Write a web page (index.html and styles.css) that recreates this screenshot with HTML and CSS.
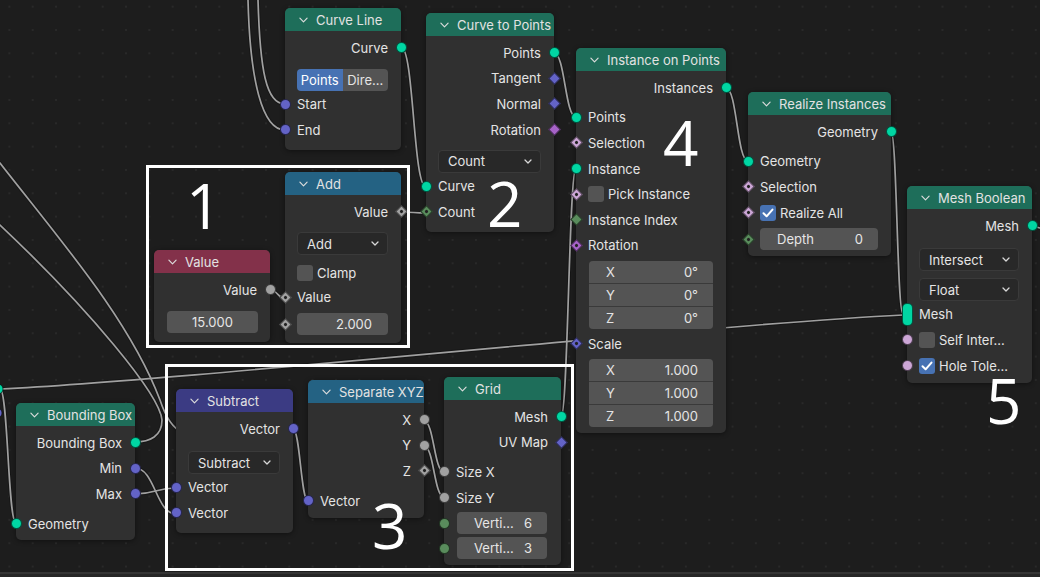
FILE: index.html
```html
<!DOCTYPE html>
<html>
<head>
<meta charset="utf-8">
<link rel="stylesheet" href="styles.css">
</head>
<body>
<div class="canvas">
  <svg class="wires" width="1040" height="572" viewBox="0 0 1040 572">
    <g class="wire-under">
      <path d="M258,0 C260,70 266,104 285,104"/>
      <path d="M248,0 C250,80 262,130 285,130"/>
      <path d="M401,47 C414,47 413,187 426,187"/>
      <path d="M401,212 C413,212 414,213 426,213"/>
      <path d="M270,290 C278,290 277,298 285,298"/>
      <path d="M554,53 C565,53 565,117 576,117"/>
      <path d="M726,88 C737,88 737,161 748,161"/>
      <path d="M891,132 C897,132 897,314 903,314"/>
      <path d="M0,389 C200,379 700,325 903,315"/>
      <path d="M0,389 C8,389 8,523 16,523"/>
      <path d="M135,442 C150,442 162,436 162,420 C160,395 90,310 0,225"/>
      <path d="M0,163 C60,240 130,320 160,400 C165,415 172,428 182,432"/>
      <path d="M135,468 C155,468 156,514 176,514"/>
      <path d="M135,494 C155,494 156,488 176,488"/>
      <path d="M293,429 C300,429 301,501 308,501"/>
      <path d="M424,421 C434,421 434,472 444,472"/>
      <path d="M424,446 C434,446 434,497 444,497"/>
      <path d="M561,417 C568,417 569,168 576,168"/>
      <path d="M1032,226 C1036,226 1038,228 1040,228"/>
    </g>
    <g class="wire">
      <path d="M258,0 C260,70 266,104 285,104"/>
      <path d="M248,0 C250,80 262,130 285,130"/>
      <path d="M401,47 C414,47 413,187 426,187"/>
      <path d="M401,212 C413,212 414,213 426,213"/>
      <path d="M270,290 C278,290 277,298 285,298"/>
      <path d="M554,53 C565,53 565,117 576,117"/>
      <path d="M726,88 C737,88 737,161 748,161"/>
      <path d="M891,132 C897,132 897,314 903,314"/>
      <path d="M0,389 C200,379 700,325 903,315"/>
      <path d="M0,389 C8,389 8,523 16,523"/>
      <path d="M135,442 C150,442 162,436 162,420 C160,395 90,310 0,225"/>
      <path d="M0,163 C60,240 130,320 160,400 C165,415 172,428 182,432"/>
      <path d="M135,468 C155,468 156,514 176,514"/>
      <path d="M135,494 C155,494 156,488 176,488"/>
      <path d="M293,429 C300,429 301,501 308,501"/>
      <path d="M424,421 C434,421 434,472 444,472"/>
      <path d="M424,446 C434,446 434,497 444,497"/>
      <path d="M561,417 C568,417 569,168 576,168"/>
      <path d="M1032,226 C1036,226 1038,228 1040,228"/>
    </g>
    <circle class="edge-sock" cx="-2" cy="389" r="5" fill="#00d6a3"/>
    <circle class="edge-sock" cx="-3" cy="413" r="5" fill="#6363c7"/>
  </svg>

  <!-- Curve Line -->
  <div class="node n-cl">
    <div class="hdr h-geo"><svg class="chev" viewBox="0 0 10 6"><path d="M1,1 L5,5 L9,1"/></svg><span>Curve Line</span></div>
    <div class="body">
      <div class="row out">Curve<i class="sk c geo"></i></div>
      <div class="w m7"><div class="tog"><span class="on">Points</span><span>Dire...</span></div></div>
      <div class="row in"><i class="sk c vec"></i>Start</div>
      <div class="row in"><i class="sk c vec"></i>End</div>
    </div>
  </div>

  <!-- Curve to Points -->
  <div class="node n-c2p">
    <div class="hdr h-geo"><svg class="chev" viewBox="0 0 10 6"><path d="M1,1 L5,5 L9,1"/></svg><span>Curve to Points</span></div>
    <div class="body">
      <div class="row out">Points<i class="sk c geo"></i></div>
      <div class="row out">Tangent<i class="sk d vec"></i></div>
      <div class="row out">Normal<i class="sk d vec"></i></div>
      <div class="row out">Rotation<i class="sk d rot"></i></div>
      <div class="w m7"><div class="menu"><span>Count</span><svg class="mchev" viewBox="0 0 8 5"><path d="M1,1 L4,4 L7,1"/></svg></div></div>
      <div class="row in"><i class="sk c geo"></i>Curve</div>
      <div class="row in"><i class="sk d p int"></i>Count</div>
    </div>
  </div>

  <!-- Add -->
  <div class="node n-add">
    <div class="hdr h-conv"><svg class="chev" viewBox="0 0 10 6"><path d="M1,1 L5,5 L9,1"/></svg><span>Add</span></div>
    <div class="body">
      <div class="row out">Value<i class="sk d p flt"></i></div>
      <div class="w m7"><div class="menu"><span>Add</span><svg class="mchev" viewBox="0 0 8 5"><path d="M1,1 L4,4 L7,1"/></svg></div></div>
      <div class="w m5"><span class="cb"></span>Clamp</div>
      <div class="row in"><i class="sk d p flt"></i>Value</div>
      <div class="w in m2"><i class="sk d p flt"></i><div class="fld rt">2.000</div></div>
    </div>
  </div>

  <!-- Value -->
  <div class="node n-val">
    <div class="hdr h-input"><svg class="chev" viewBox="0 0 10 6"><path d="M1,1 L5,5 L9,1"/></svg><span>Value</span></div>
    <div class="body">
      <div class="row out">Value<i class="sk c flt"></i></div>
      <div class="w m7 wv"><div class="fld ctr">15.000</div></div>
    </div>
  </div>

  <!-- Instance on Points -->
  <div class="node n-iop">
    <div class="hdr h-geo"><svg class="chev" viewBox="0 0 10 6"><path d="M1,1 L5,5 L9,1"/></svg><span>Instance on Points</span></div>
    <div class="body">
      <div class="row out">Instances<i class="sk c geo"></i></div>
      <div class="row in m4"><i class="sk c geo"></i>Points</div>
      <div class="row in"><i class="sk d p bool"></i>Selection</div>
      <div class="row in"><i class="sk c geo"></i>Instance</div>
      <div class="row in"><i class="sk d p bool"></i><span class="cb"></span>Pick Instance</div>
      <div class="row in"><i class="sk d int"></i>Instance Index</div>
      <div class="row in"><i class="sk d p rot"></i>Rotation</div>
      <div class="vb m3">
        <div><span>X</span><span>0°</span></div>
        <div><span>Y</span><span>0°</span></div>
        <div><span>Z</span><span>0°</span></div>
      </div>
      <div class="row in m2"><i class="sk d p vec"></i>Scale</div>
      <div class="vb m2">
        <div><span>X</span><span>1.000</span></div>
        <div><span>Y</span><span>1.000</span></div>
        <div><span>Z</span><span>1.000</span></div>
      </div>
    </div>
  </div>

  <!-- Realize Instances -->
  <div class="node n-ri">
    <div class="hdr h-geo"><svg class="chev" viewBox="0 0 10 6"><path d="M1,1 L5,5 L9,1"/></svg><span>Realize Instances</span></div>
    <div class="body">
      <div class="row out">Geometry<i class="sk c geo"></i></div>
      <div class="row in m4"><i class="sk c geo"></i>Geometry</div>
      <div class="row in"><i class="sk d p bool"></i>Selection</div>
      <div class="row in"><i class="sk d p bool"></i><span class="cb on"><svg viewBox="0 0 16 16"><path d="M3.5,8.3 L6.6,11.3 L12.5,4.6"/></svg></span>Realize All</div>
      <div class="w in m2"><i class="sk d p int"></i><div class="fld"><span>Depth</span><span>0</span></div></div>
    </div>
  </div>

  <!-- Mesh Boolean -->
  <div class="node n-mb">
    <div class="hdr h-geo"><svg class="chev" viewBox="0 0 10 6"><path d="M1,1 L5,5 L9,1"/></svg><span>Mesh Boolean</span></div>
    <div class="body">
      <div class="row out">Mesh<i class="sk c geo"></i></div>
      <div class="w m9"><div class="menu"><span>Intersect</span><svg class="mchev" viewBox="0 0 8 5"><path d="M1,1 L4,4 L7,1"/></svg></div></div>
      <div class="w m6"><div class="menu"><span>Float</span><svg class="mchev" viewBox="0 0 8 5"><path d="M1,1 L4,4 L7,1"/></svg></div></div>
      <div class="row in"><i class="sk pill geo"></i>Mesh</div>
      <div class="row in"><i class="sk c bool"></i><span class="cb"></span>Self Inter...</div>
      <div class="row in"><i class="sk c bool"></i><span class="cb on"><svg viewBox="0 0 16 16"><path d="M3.5,8.3 L6.6,11.3 L12.5,4.6"/></svg></span>Hole Tole...</div>
    </div>
  </div>

  <!-- Bounding Box -->
  <div class="node n-bb">
    <div class="hdr h-geo"><svg class="chev" viewBox="0 0 10 6"><path d="M1,1 L5,5 L9,1"/></svg><span>Bounding Box</span></div>
    <div class="body">
      <div class="row out">Bounding Box<i class="sk c geo"></i></div>
      <div class="row out">Min<i class="sk c vec"></i></div>
      <div class="row out">Max<i class="sk c vec"></i></div>
      <div class="row in m4"><i class="sk c geo"></i>Geometry</div>
    </div>
  </div>

  <!-- Subtract -->
  <div class="node n-sub">
    <div class="hdr h-vec"><svg class="chev" viewBox="0 0 10 6"><path d="M1,1 L5,5 L9,1"/></svg><span>Subtract</span></div>
    <div class="body">
      <div class="row out">Vector<i class="sk c vec"></i></div>
      <div class="w m9"><div class="menu"><span>Subtract</span><svg class="mchev" viewBox="0 0 8 5"><path d="M1,1 L4,4 L7,1"/></svg></div></div>
      <div class="row in"><i class="sk c vec"></i>Vector</div>
      <div class="row in"><i class="sk c vec"></i>Vector</div>
    </div>
  </div>

  <!-- Separate XYZ -->
  <div class="node n-sep">
    <div class="hdr h-conv"><svg class="chev" viewBox="0 0 10 6"><path d="M1,1 L5,5 L9,1"/></svg><span>Separate XYZ</span></div>
    <div class="body">
      <div class="row out">X<i class="sk c flt"></i></div>
      <div class="row out">Y<i class="sk c flt"></i></div>
      <div class="row out">Z<i class="sk d p flt"></i></div>
      <div class="row in m4"><i class="sk c vec"></i>Vector</div>
    </div>
  </div>

  <!-- Grid -->
  <div class="node n-grid">
    <div class="hdr h-geo"><svg class="chev" viewBox="0 0 10 6"><path d="M1,1 L5,5 L9,1"/></svg><span>Grid</span></div>
    <div class="body">
      <div class="row out">Mesh<i class="sk c geo"></i></div>
      <div class="row out">UV Map<i class="sk d vec"></i></div>
      <div class="row in m4"><i class="sk c flt"></i>Size X</div>
      <div class="row in"><i class="sk c flt"></i>Size Y</div>
      <div class="w in m1 wg"><i class="sk c int"></i><div class="fld"><span>Verti...</span><span>6</span></div></div>
      <div class="w in m1 wg"><i class="sk c int"></i><div class="fld"><span>Verti...</span><span>3</span></div></div>
    </div>
  </div>

  <div class="anno a1"></div>
  <div class="anno a3"></div>

  <div class="num k1">1</div>
  <div class="num k2">2</div>
  <div class="num k3">3</div>
  <div class="num k4">4</div>
  <div class="num k5">5</div>
</div>
<div class="statusbar"></div>
</body>
</html>
```

FILE: styles.css
```css
html, body {
  margin: 0;
  padding: 0;
  background: #1d1d1d;
  overflow: hidden;
}

body {
  font-family: Inter, "Noto Sans", "Liberation Sans", sans-serif;
  font-size: 13px;
  color: #e4e4e4;
}

.canvas {
  position: relative;
  width: 1040px;
  height: 572px;
  overflow: hidden;
  background-color: #1d1d1d;
  background-image: radial-gradient(circle at center, #292929 0, #292929 0.9px, transparent 1.3px);
  background-size: 23.333px 23.333px;
  background-position: -2.3px -5px;
}

.statusbar {
  height: 3px;
  border-top: 2px solid #353535;
  background: #262626;
}

.wires {
  position: absolute;
  left: 0;
  top: 0;
}

.wires path {
  fill: none;
  stroke-linecap: round;
}

.wire-under path {
  stroke: #161616;
  stroke-width: 3.6;
}

.wire path {
  stroke: #a0a0a0;
  stroke-width: 1.7;
}

.edge-sock {
  stroke: rgba(0, 0, 0, 0.6);
  stroke-width: 1;
}

/* nodes */
.node {
  position: absolute;
  background: #303030;
  border-radius: 5px;
  box-shadow: 0 1px 5px rgba(0, 0, 0, 0.45);
}

.hdr {
  height: 23px;
  display: flex;
  align-items: center;
  gap: 8px;
  padding-left: 14px;
  border-radius: 5px 5px 0 0;
  color: #e2e2e2;
  white-space: nowrap;
  overflow: hidden;
}

.h-geo { background: #1e6e5a; }
.h-conv { background: #246283; }
.h-input { background: #83314a; }
.h-vec { background: #3b3b83; }

.chev {
  width: 9px;
  height: 6px;
  flex: none;
}

.chev path {
  fill: none;
  stroke: #dcdcdc;
  stroke-width: 1.3;
  stroke-linecap: round;
  stroke-linejoin: round;
}

.body {
  padding-top: 4px;
  padding-bottom: 6px;
}

.row {
  position: relative;
  height: 25.6px;
  display: flex;
  align-items: center;
  padding: 0 13px 0 12px;
  white-space: nowrap;
}

.row.out {
  justify-content: flex-end;
}

.w {
  position: relative;
  height: 24px;
  display: flex;
  align-items: center;
  padding: 0 13px 0 12px;
  white-space: nowrap;
}

.wv { padding: 0 12px 0 13px; }
.wg { padding: 0 14px 0 13px; }

.m1 { margin-top: 1px; }
.m2 { margin-top: 2px; }
.m3 { margin-top: 3px; }
.m4 { margin-top: 4px; }
.m5 { margin-top: 5px; }
.m6 { margin-top: 6px; }
.m7 { margin-top: 7px; }
.m9 { margin-top: 9px; }

/* sockets */
.sk {
  position: absolute;
  top: 50%;
  width: 9px;
  height: 9px;
  margin-top: -5.5px;
  border: 1px solid rgba(0, 0, 0, 0.6);
  box-sizing: content-box;
}

.in > .sk { left: -5.5px; }
.out > .sk { right: -5.5px; }

.sk.c { border-radius: 50%; }

.sk.d {
  width: 7px;
  height: 7px;
  margin-top: -4.5px;
  transform: rotate(45deg);
}

.in > .sk.d { left: -4.5px; }
.out > .sk.d { right: -4.5px; }

.sk.p::after {
  content: "";
  position: absolute;
  left: 50%;
  top: 50%;
  width: 2.6px;
  height: 2.6px;
  margin: -1.3px 0 0 -1.3px;
  background: #222;
  border-radius: 50%;
}

.sk.pill {
  width: 9px;
  height: 21px;
  margin-top: -11.5px;
  border-radius: 5px;
}

.geo { background: #00d6a3; }
.vec { background: #6363c7; }
.flt { background: #a1a1a1; }
.int { background: #598c5c; }
.bool { background: #cca6d6; }
.rot { background: #a663c7; }

/* widgets */
.fld {
  flex: 1;
  height: 22px;
  box-sizing: border-box;
  background: #545454;
  border-radius: 4px;
  display: flex;
  align-items: center;
  justify-content: space-between;
  padding: 0 15px 0 17px;
  color: #e6e6e6;
}

.fld.ctr {
  justify-content: center;
  padding: 0;
}

.fld.rt {
  justify-content: flex-end;
  padding-right: 16px;
}

.menu {
  flex: 1;
  height: 23px;
  box-sizing: border-box;
  background: #282828;
  border: 1px solid #3a3a3a;
  border-radius: 4px;
  display: flex;
  align-items: center;
  justify-content: space-between;
  padding: 0 8px 0 9px;
}

.mchev {
  width: 8px;
  height: 5px;
}

.mchev path {
  fill: none;
  stroke: #d8d8d8;
  stroke-width: 1.3;
  stroke-linecap: round;
  stroke-linejoin: round;
}

.tog {
  flex: 1;
  height: 22px;
  display: flex;
  border-radius: 4px;
  overflow: hidden;
}

.tog span {
  flex: 1;
  display: flex;
  align-items: center;
  justify-content: center;
  background: #545454;
}

.tog .on {
  background: #4772b3;
  color: #fff;
}

.cb {
  flex: none;
  width: 16px;
  height: 16px;
  border-radius: 3px;
  background: #545454;
  margin-right: 4px;
  display: flex;
  align-items: center;
  justify-content: center;
}

.cb.on {
  background: #4772b3;
}

.cb svg {
  width: 16px;
  height: 16px;
}

.cb svg path {
  fill: none;
  stroke: #fff;
  stroke-width: 2;
  stroke-linecap: round;
  stroke-linejoin: round;
}

.vb {
  margin-left: 13px;
  margin-right: 13px;
  border-radius: 4px;
  overflow: hidden;
  display: flex;
  flex-direction: column;
  gap: 1px;
  background: #3a3a3a;
}

.vb > div {
  height: 22px;
  background: #545454;
  display: flex;
  align-items: center;
  justify-content: space-between;
  padding: 0 15px 0 17px;
}

/* node placement on the canvas */
.n-cl { left: 285px; top: 8px; width: 116px; }
.n-cl .body { padding-bottom: 7px; }

.n-c2p { left: 426px; top: 13px; width: 128px; }
.n-c2p .body { padding-bottom: 7px; }

.n-add { left: 285px; top: 172px; width: 116px; }
.n-add .body { padding-bottom: 7px; }

.n-val { left: 154px; top: 250px; width: 116px; }
.n-val .body { padding-bottom: 8px; }

.n-iop { left: 576px; top: 48px; width: 150px; }
.n-iop .body { padding-bottom: 6px; }

.n-ri { left: 748px; top: 92px; width: 143px; }
.n-ri .body { padding-bottom: 5px; }

.n-mb { left: 907px; top: 186px; width: 125px; }
.n-mb .body { padding-bottom: 5px; }

.n-bb { left: 16px; top: 403px; width: 119px; }
.n-bb .body { padding-bottom: 4px; }

.n-sub { left: 176px; top: 389px; width: 117px; }
.n-sub .body { padding-bottom: 7px; }

.n-sep { left: 308px; top: 380px; width: 116px; }
.n-sep .body { padding-bottom: 5px; }

.n-grid { left: 444px; top: 377px; width: 117px; }
.n-grid .body { padding-bottom: 5px; }

/* annotations */
.anno {
  position: absolute;
  border: 3px solid #fff;
  box-sizing: border-box;
}

.a1 { left: 146px; top: 165px; width: 264px; height: 183px; }
.a3 { left: 165px; top: 364px; width: 409px; height: 207px; }

.num {
  position: absolute;
  font-family: "Open Sans", "Noto Sans", sans-serif;
  font-size: 62px;
  line-height: 46px;
  color: #fff;
}

.k1 { left: 186px; top: 182px; }
.k2 { left: 487px; top: 180px; }
.k3 { left: 372px; top: 502px; }
.k4 { left: 663px; top: 119px; }
.k5 { left: 986px; top: 377px; }
```
